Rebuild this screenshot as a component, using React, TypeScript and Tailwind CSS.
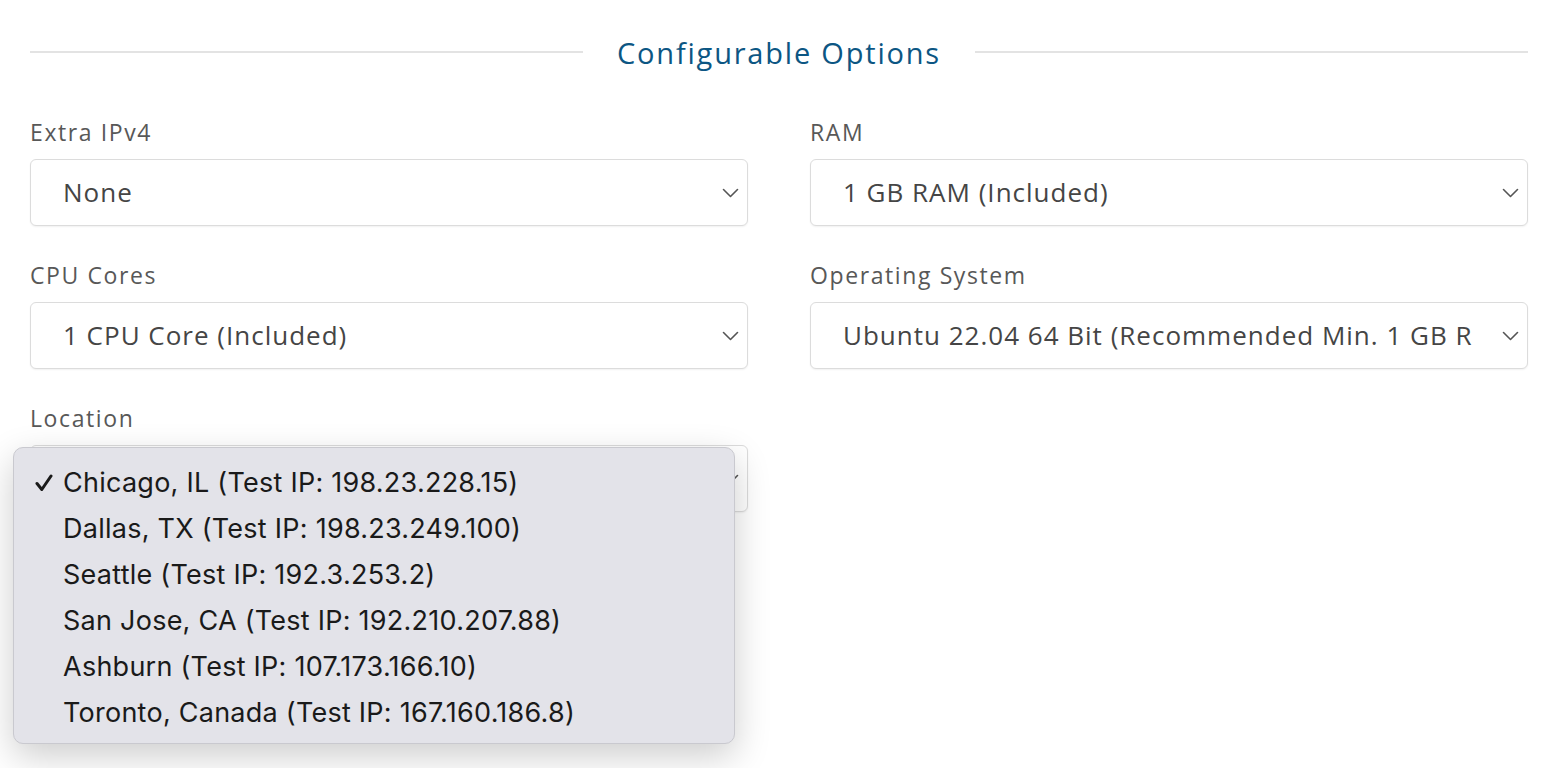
import React from 'react';

const locations = [
  'Chicago, IL (Test IP: 198.23.228.15)',
  'Dallas, TX (Test IP: 198.23.249.100)',
  'Seattle (Test IP: 192.3.253.2)',
  'San Jose, CA (Test IP: 192.210.207.88)',
  'Ashburn (Test IP: 107.173.166.10)',
  'Toronto, Canada (Test IP: 167.160.186.8)',
];

const Chevron = () => (
  <svg width="17" height="10" viewBox="0 0 17 10" fill="none" className="shrink-0">
    <path d="M1.5 1.5 L8.5 8.5 L15.5 1.5" stroke="#555" strokeWidth="1.6" strokeLinecap="round" strokeLinejoin="round" />
  </svg>
);

const Check = () => (
  <svg width="18" height="18" viewBox="0 0 18 18" fill="none">
    <path d="M2 9.5 L6.8 15.5 L16 2" stroke="#1a1a1a" strokeWidth="3" strokeLinecap="round" strokeLinejoin="round" />
  </svg>
);

const Field: React.FC<{ label: string; value: string; children?: React.ReactNode }> = ({ label, value, children }) => (
  <div className="relative flex flex-col">
    <label className="text-[23px] leading-[30px] text-[#585858] tracking-[1.6px] mb-[12px]">{label}</label>
    <div className="h-[67px] flex items-center border border-[#dcdcdc] rounded-[6px] bg-white pl-[32px] pr-[8px] shadow-[0_1px_2px_rgba(0,0,0,0.06)]">
      <span className="flex-1 text-[26px] text-[#454545] tracking-[1px] whitespace-nowrap overflow-hidden">{value}</span>
      <span className="ml-[30px]"><Chevron /></span>
    </div>
    {children}
  </div>
);

export default function App() {
  return (
    <div className="w-[1560px] h-[768px] bg-white overflow-hidden font-['Open_Sans',sans-serif]">
      <div className="pl-[30px] pr-[32px] pt-[30px]">
        <div className="flex items-center gap-[34px] h-[44px]">
          <div className="flex-1 h-[2px] bg-[#e3e3e3]" />
          <h2 className="text-[29px] text-[#0c5683] tracking-[1.8px] leading-none">Configurable Options</h2>
          <div className="flex-1 h-[2px] bg-[#e3e3e3]" />
        </div>
        <div className="grid grid-cols-2 gap-x-[62px] gap-y-[34px] mt-[43px]">
          <Field label="Extra IPv4" value="None" />
          <Field label="RAM" value="1 GB RAM (Included)" />
          <Field label="CPU Cores" value="1 CPU Core (Included)" />
          <Field label="Operating System" value="Ubuntu 22.04 64 Bit (Recommended Min. 1 GB RAM)" />
          <Field label="Location" value="">
            <div className="absolute left-[-17px] top-[44px] w-[722px] h-[297px] rounded-[10px] bg-[#e3e3e9] border border-[#c9c9cf] shadow-[0_12px_36px_rgba(0,0,0,0.2)] pt-[12px] font-['Inter',sans-serif]">
              {locations.map((loc, i) => (
                <div key={loc} className="flex items-center h-[46px] text-[27px] text-[#1a1a1a] tracking-[0.25px]">
                  <span className="w-[49px] pl-[21px] flex items-center">{i === 0 ? <Check /> : null}</span>
                  <span>{loc}</span>
                </div>
              ))}
            </div>
          </Field>
        </div>
      </div>
    </div>
  );
}
